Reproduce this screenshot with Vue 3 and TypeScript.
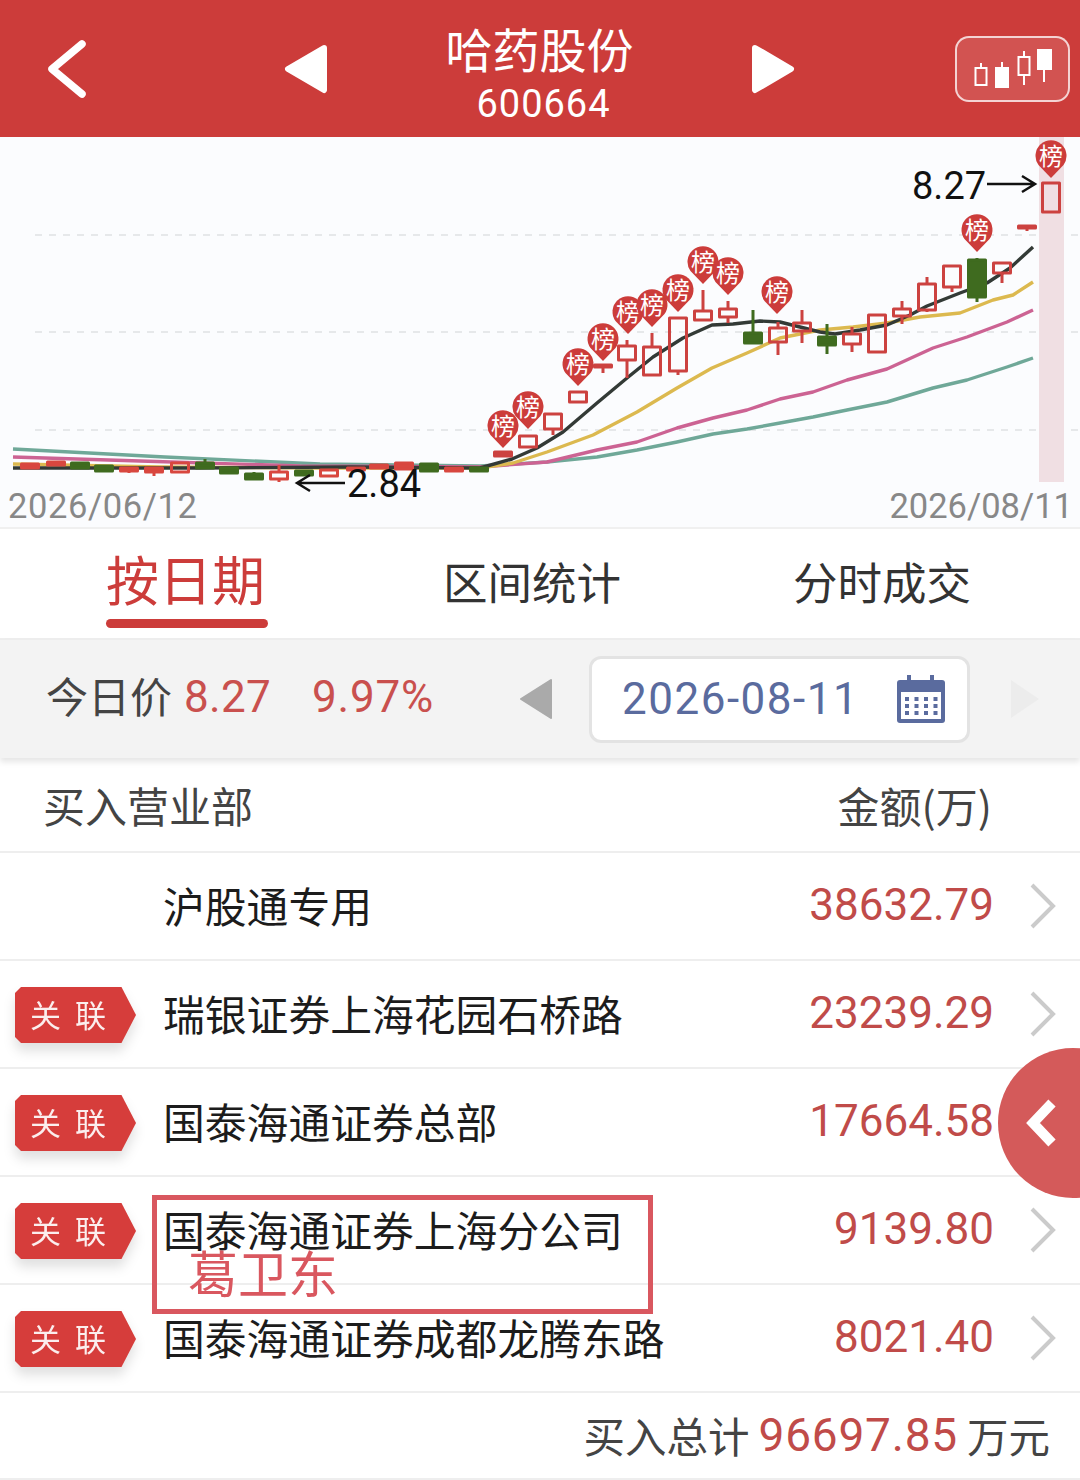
<script setup lang="ts">
type Candle = [number, number, number, number, number, 'h' | 'r' | 'g']

// x, body top, body bottom, wick top, wick bottom, kind
const candles: Candle[] = [
  [30, 464, 468, 464, 468, 'r'], [56, 462, 465, 462, 465, 'r'], [80, 463, 468, 463, 468, 'g'],
  [104, 466, 471, 466, 471, 'g'], [129, 468, 471, 468, 473, 'r'], [154, 468, 472, 468, 476, 'r'],
  [180, 463, 472, 463, 472, 'h'], [205, 463, 468, 459, 468, 'g'], [229, 468, 473, 468, 473, 'g'],
  [254, 474, 479, 472, 479, 'g'], [279, 472, 479, 465, 482, 'h'], [304, 471, 475, 471, 475, 'g'],
  [329, 470, 476, 470, 476, 'h'], [356, 468, 470, 468, 470, 'r'], [379, 465, 468, 465, 468, 'r'],
  [404, 463, 469, 463, 469, 'r'], [429, 464, 471, 464, 471, 'g'], [454, 468, 471, 468, 471, 'r'],
  [479, 468, 471, 468, 471, 'g'],
  [503, 452, 456, 452, 456, 'r'], [528, 436, 447, 436, 447, 'h'], [553, 414, 429, 414, 435, 'h'],
  [578, 392, 402, 392, 402, 'h'], [603, 365, 367, 365, 373, 'r'], [627, 346, 360, 340, 378, 'h'],
  [652, 347, 375, 333, 375, 'h'], [678, 318, 371, 318, 375, 'h'], [703, 311, 320, 290, 320, 'h'],
  [728, 309, 317, 301, 323, 'h'], [753, 333, 343, 310, 343, 'g'], [778, 328, 342, 322, 355, 'h'],
  [802, 323, 331, 310, 343, 'h'], [827, 337, 345, 324, 354, 'g'], [852, 334, 344, 327, 352, 'h'],
  [877, 315, 352, 315, 352, 'h'], [902, 309, 316, 301, 324, 'h'], [927, 284, 310, 277, 312, 'h'],
  [952, 266, 287, 266, 292, 'h'], [977, 260, 297, 258, 302, 'g'], [1002, 263, 273, 263, 283, 'h'],
  [1027, 226, 228, 226, 231, 'r'], [1051, 183, 212, 183, 212, 'h'],
]
const early = candles.filter((c) => c[0] < 500)
const late = candles.filter((c) => c[0] >= 500)
const wick = (c: Candle) => `M${c[0]} ${c[3]}V${c[1]}M${c[0]} ${c[2]}V${c[4]}`

const pins: [number, number][] = [
  [503, 426], [528, 407], [578, 364], [603, 339], [628, 312], [652, 305],
  [678, 290], [703, 262], [728, 273], [777, 292], [977, 230], [1051, 156],
]
const pinPath = (x: number, y: number) =>
  `M${x} ${y + 22}L${x - 12.5} ${y + 9}A15.5 15.5 0 1 1 ${x + 12.5} ${y + 9}Z`

const lines = [
  { c: '#6fa898', p: '13,449 165,457 320,464 480,466 547,462 597,457 637,450 677,442 713,434 747,429 780,423 813,417 847,410 887,402 933,388 967,380 1007,367 1033,358' },
  { c: '#cc6393', p: '13,457 140,461 300,466 480,467 547,462 597,450 637,442 677,428 713,418 747,410 780,399 813,392 847,380 887,369 933,348 967,337 1007,322 1033,310' },
  { c: '#dcb94f', p: '13,464 160,467 320,468 480,468 513,463 547,452 593,435 637,412 677,388 712,368 747,353 780,338 820,330 853,327 887,323 920,317 960,313 993,300 1013,295 1033,282' },
  { c: '#333a36', p: '13,468 200,468 350,467 480,468 512,459 537,448 563,432 597,403 627,378 653,357 683,338 712,325 733,324 760,321 780,322 800,327 820,332 835,334 860,330 887,325 910,315 927,306 960,293 987,283 1010,268 1033,247' },
]

const rows = [
  { name: '沪股通专用', value: '38632.79', tag: false },
  { name: '瑞银证券上海花园石桥路', value: '23239.29', tag: true },
  { name: '国泰海通证券总部', value: '17664.58', tag: true },
  { name: '国泰海通证券上海分公司', value: '9139.80', tag: true },
  { name: '国泰海通证券成都龙腾东路', value: '8021.40', tag: true },
]
const calDots = [0, 1, 2].flatMap((r) => [0, 1, 2, 3].map((c) => [8 + c * 9.5, 22 + r * 7]))
</script>

<template>
  <div class="page">
    <header class="top">
      <svg class="back" viewBox="0 0 40 58"><path d="M35 4 5 29l30 25" fill="none" stroke="#fff" stroke-width="7.5" stroke-linecap="round" stroke-linejoin="round" /></svg>
      <svg class="tri tri-l" viewBox="0 0 44 50"><path d="M40 4 4 25l36 21z" fill="#fff" stroke="#fff" stroke-width="6" stroke-linejoin="round" /></svg>
      <div class="title">
        <div class="t1">哈药股份</div>
        <div class="t2">600664</div>
      </div>
      <svg class="tri tri-r" viewBox="0 0 44 50"><path d="M4 4l36 21L4 46z" fill="#fff" stroke="#fff" stroke-width="6" stroke-linejoin="round" /></svg>
      <div class="kbtn">
        <svg viewBox="0 0 115 66" width="115" height="66">
          <g fill="none" stroke="#fff" stroke-width="2">
            <path d="M26 27v5M47 26v5" />
            <rect x="20.5" y="32" width="11" height="17" />
            <rect x="63.5" y="21" width="11" height="18" />
            <path d="M69 15v6M69 39v10M89 33v13" />
          </g>
          <rect x="40" y="31" width="14" height="21" fill="#fff" />
          <rect x="82" y="13" width="15" height="21" fill="#fff" />
        </svg>
      </div>
    </header>

    <section class="chart">
      <svg viewBox="0 137 1080 390" width="1080" height="390">
        <path v-for="y in [235, 332, 430]" :key="y" :d="`M35 ${y}H1080`" stroke="#dfe1e4" stroke-width="1.5" stroke-dasharray="7 7" />
        <rect x="1039" y="137" width="25" height="345" fill="#f0dfe3" />
        <polyline v-for="l in lines" :key="l.c" :points="l.p" fill="none" :stroke="l.c" stroke-width="3.4" stroke-linejoin="round" />
        <g v-for="c in early" :key="c[0]">
          <path :d="wick(c)" :stroke="c[5] === 'g' ? '#3f6b1f' : '#d8473f'" stroke-width="3" />
          <rect
            :x="c[0] - 8.5" :y="c[1]" width="17" :height="c[2] - c[1]"
            :fill="c[5] === 'g' ? '#3f6b1f' : c[5] === 'r' ? '#d8473f' : 'none'"
            :stroke="c[5] === 'g' ? '#3f6b1f' : '#d8473f'" stroke-width="3" stroke-linejoin="round"
          />
        </g>
        <g v-for="c in late" :key="c[0]">
          <path :d="wick(c)" :stroke="c[5] === 'g' ? '#3f6b1f' : '#cc4240'" stroke-width="3" />
          <rect
            :x="c[0] - 8.5" :y="c[1]" width="17" :height="c[2] - c[1]"
            :fill="c[5] === 'g' ? '#3f6b1f' : c[5] === 'r' ? '#cc4240' : 'none'"
            :stroke="c[5] === 'g' ? '#3f6b1f' : '#cc4240'" stroke-width="3" stroke-linejoin="round"
          />
        </g>
        <g v-for="p in pins" :key="p[0]">
          <path :d="pinPath(p[0], p[1])" fill="#cc3c3a" />
          <text class="pin" :x="p[0]" :y="p[1] + 9" text-anchor="middle">榜</text>
        </g>
        <text class="lbl" x="912" y="199">8.27</text>
        <path d="M987 184h48m-13-8 13 8-13 8" fill="none" stroke="#111" stroke-width="2.5" />
        <text class="lbl" x="347" y="497">2.84</text>
        <path d="M345 483h-48m13-8-13 8 13 8" fill="none" stroke="#111" stroke-width="2.5" />
        <text class="date date-l" x="8" y="518">2026/06/12</text>
        <text class="date" x="1073" y="518" text-anchor="end">2026/08/11</text>
      </svg>
    </section>

    <nav class="tabs">
      <div class="tab active">按日期</div>
      <div class="tab">区间统计</div>
      <div class="tab">分时成交</div>
    </nav>

    <section class="bar">
      <span class="today">今日价</span>
      <span class="price">8.27</span>
      <span class="pct">9.97%</span>
      <svg class="arrow-l" viewBox="0 0 34 42" width="34" height="42"><path d="M32 2 2 21l30 19z" fill="#aaa" stroke="#aaa" stroke-width="2" stroke-linejoin="round" /></svg>
      <div class="datebox">
        <span>2026-08-11</span>
        <svg viewBox="0 0 48 48" width="48" height="48">
          <rect y="5" width="48" height="43" rx="3" fill="#5a6b9e" />
          <rect x="4" y="17" width="40" height="27" fill="#fff" />
          <rect x="10" y="0" width="4" height="12" fill="#5a6b9e" />
          <rect x="33" y="0" width="4" height="12" fill="#5a6b9e" />
          <rect v-for="(d, i) in calDots" :key="i" :x="d[0]" :y="d[1]" width="4" height="4" fill="#5a6b9e" />
        </svg>
      </div>
      <svg class="arrow-r" viewBox="0 0 32 42" width="32" height="42"><path d="M2 2l28 19L2 40z" fill="#ececec" /></svg>
    </section>

    <div class="thead">
      <span>买入营业部</span>
      <span>金额(万)</span>
    </div>

    <div v-for="r in rows" :key="r.name" class="row">
      <div class="slot">
        <div v-if="r.tag" class="tagwrap"><div class="tag">关联</div></div>
      </div>
      <div class="name">{{ r.name }}</div>
      <div class="val">{{ r.value }}</div>
      <svg class="chev" viewBox="0 0 26 46" width="26" height="46"><path d="M2 2l21 21L2 44" fill="none" stroke="#cbcbcb" stroke-width="4" /></svg>
    </div>

    <footer class="foot">
      <span>买入总计</span>
      <span class="sum">96697.85</span>
      <span>万元</span>
    </footer>

    <div class="fab">
      <svg viewBox="0 0 34 50" width="34" height="50"><path d="M26 5 7 25l19 20" fill="none" stroke="#fff" stroke-width="10" /></svg>
    </div>
    <div class="note"><span>葛卫东</span></div>
  </div>
</template>

<style scoped>
.page {
  position: relative;
  width: 1080px;
  height: 1480px;
  overflow: hidden;
  background: #fff;
  font-family: "Noto Sans CJK SC", "Noto Sans", sans-serif;
  color: #222;
}
.top {
  height: 137px;
  background: #cc3c3a;
  display: flex;
  align-items: center;
  box-sizing: border-box;
  padding: 0 10px 0 47px;
}
.back { width: 40px; height: 58px; }
.tri { width: 44px; height: 50px; }
.tri-l { margin-left: 197px; }
.title {
  width: 423px;
  color: #fff;
  text-align: center;
  padding-top: 7px;
}
.t1 { font-size: 47px; line-height: 54px; margin-top: 2px; }
.t2 {
  font-family: "Roboto", sans-serif;
  font-size: 38px;
  line-height: 42px;
  margin-top: 8px;
  padding-left: 8px;
  letter-spacing: 1px;
}
.kbtn {
  margin-left: auto;
  width: 115px;
  height: 66px;
  box-sizing: border-box;
  border: 2px solid rgba(255, 255, 255, 0.75);
  border-radius: 14px;
  background: rgba(255, 255, 255, 0.12);
  overflow: hidden;
}
.kbtn svg { display: block; margin: -2px; }
.chart { height: 390px; background: #fbfcfe; }
.chart svg { display: block; }
.pin { font-size: 24px; fill: #fff; font-family: "Noto Sans CJK SC", sans-serif; }
.lbl { font-size: 38px; fill: #111; font-family: "Roboto", sans-serif; }
.date { font-size: 34.5px; fill: #888; font-family: "Roboto", sans-serif; }
.date-l { letter-spacing: 0.6px; }
.tabs {
  height: 113px;
  box-sizing: border-box;
  border-top: 2px solid #f0f0f0;
  border-bottom: 2px solid #eee;
  display: flex;
  padding-left: 106px;
}
.tab {
  position: relative;
  font-size: 44.5px;
  line-height: 103px;
  color: #333;
}
.tab:nth-child(2) { margin-left: 178px; }
.tab:nth-child(3) { margin-left: 172px; }
.tab.active { font-size: 53px; line-height: 99px; color: #cc3c3a; }
.tab.active::after {
  content: "";
  position: absolute;
  left: 0;
  right: -3px;
  top: 90px;
  height: 9px;
  border-radius: 5px;
  background: #cc3c3a;
}
.bar {
  height: 118px;
  background: #f3f3f3;
  display: flex;
  align-items: center;
  padding-left: 46px;
  box-sizing: border-box;
  box-shadow: 0 4px 6px rgba(0, 0, 0, 0.1);
  position: relative;
  font-size: 42px;
}
.today { color: #444; margin-bottom: 10px; }
.price, .pct {
  font-family: "Roboto", sans-serif;
  color: #c9504e;
  font-size: 44px;
  letter-spacing: 0.3px;
  margin-bottom: 4px;
}
.price { margin-left: 12px; }
.pct { margin-left: 41px; letter-spacing: 0.8px; }
.arrow-l { margin-left: 85px; }
.datebox {
  margin-left: 36px;
  width: 381px;
  height: 87px;
  box-sizing: border-box;
  background: #fff;
  border: 3px solid #e3e3e3;
  border-radius: 12px;
  display: flex;
  align-items: center;
  justify-content: space-between;
  padding: 0 22px 0 30px;
  color: #5a6b9e;
  font-family: "Roboto", sans-serif;
  font-size: 44px;
  letter-spacing: 1.5px;
}
.arrow-r { margin-left: 39px; }
.thead {
  height: 95px;
  box-sizing: border-box;
  border-bottom: 2px solid #eee;
  display: flex;
  justify-content: space-between;
  align-items: center;
  padding: 0 88px 0 43px;
  font-size: 42px;
  color: #444;
}
.row {
  height: 108px;
  box-sizing: border-box;
  border-bottom: 2px solid #eee;
  display: flex;
  align-items: center;
  padding-left: 15px;
  padding-right: 24px;
}
.slot { width: 148px; flex: none; }
.tagwrap { width: 121px; margin-top: 2px; filter: drop-shadow(0 8px 6px rgba(0, 0, 0, 0.12)); }
.tag {
  height: 56px;
  width: 121px;
  box-sizing: border-box;
  background: #d63d3b;
  clip-path: polygon(0 6px, 6px 0, 88% 0, 100% 50%, 88% 100%, 6px 100%, 0 50px);
  color: #fbeeee;
  font-size: 31px;
  line-height: 54px;
  letter-spacing: 14px;
  padding-left: 15px;
  white-space: nowrap;
}
.name { font-size: 41.8px; color: #1c1c1c; white-space: nowrap; margin-bottom: 2px; }
.val {
  margin-left: auto;
  font-family: "Roboto", sans-serif;
  font-size: 44px;
  color: #c04b49;
  margin-bottom: 2px;
}
.chev { margin-left: 36px; flex: none; }
.foot {
  height: 87px;
  box-sizing: border-box;
  border-bottom: 2px solid #eee;
  display: flex;
  align-items: center;
  justify-content: flex-end;
  gap: 9px;
  padding: 0 30px 2px 0;
  font-size: 41.5px;
  color: #444;
}
.sum {
  font-family: "Roboto", sans-serif;
  font-size: 46px;
  letter-spacing: 0.8px;
  color: #c04b49;
}
.fab {
  position: absolute;
  left: 998px;
  top: 1048px;
  width: 150px;
  height: 150px;
  border-radius: 50%;
  background: #d45a5a;
  display: flex;
  align-items: center;
  padding-left: 28px;
  box-sizing: border-box;
}
.note {
  position: absolute;
  left: 152px;
  top: 1195px;
  width: 501px;
  height: 119px;
  box-sizing: border-box;
  border: 5px solid #d9575f;
}
.note span {
  position: absolute;
  left: 31px;
  top: 41px;
  font-size: 50px;
  line-height: 60px;
  color: #d9575f;
}
</style>
